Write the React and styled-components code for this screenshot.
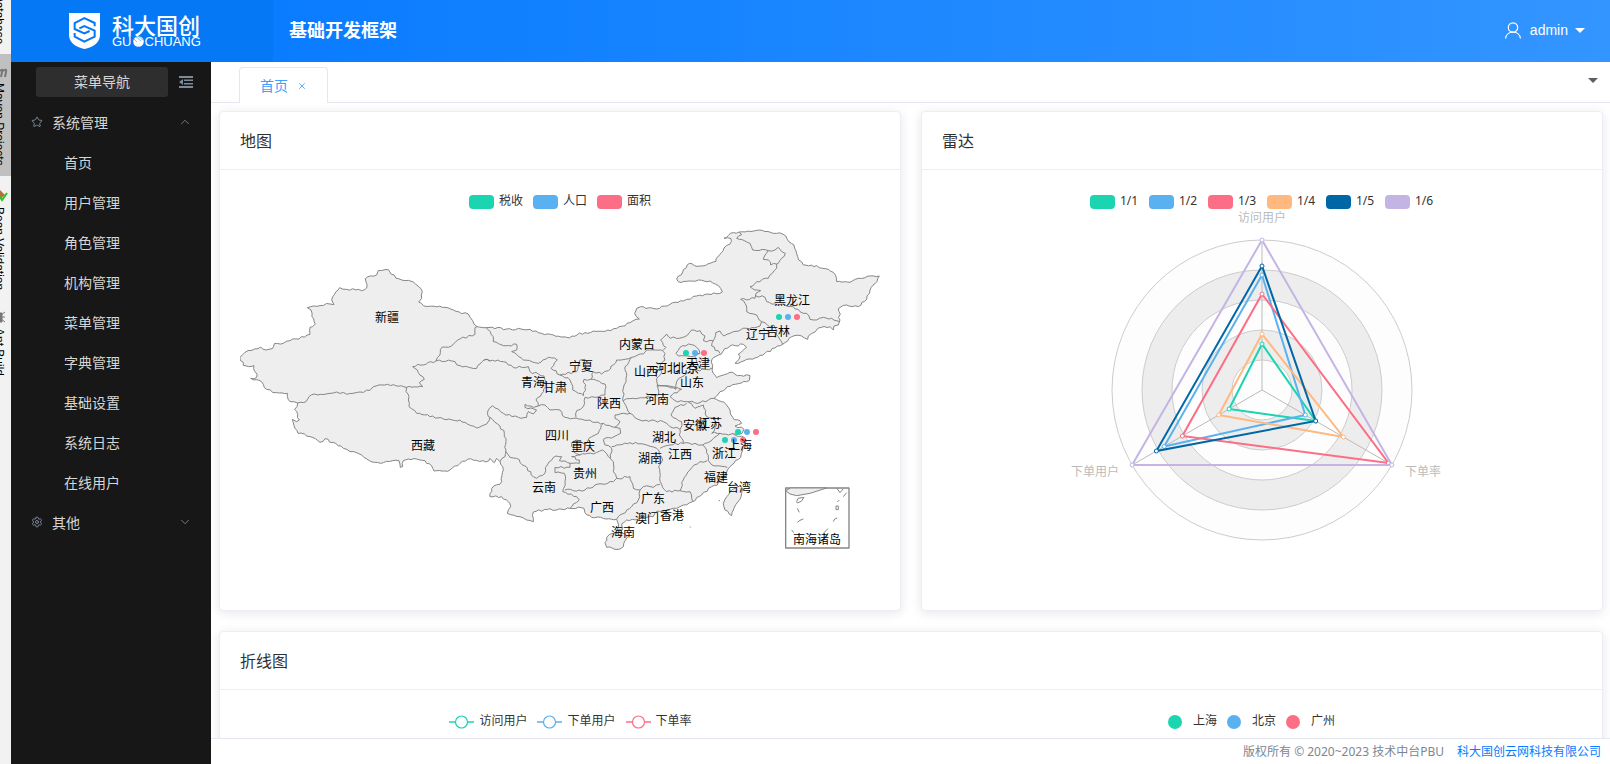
import styled, { createGlobalStyle, css } from "styled-components";
import { Star, Settings, ChevronUp, ChevronDown, X } from "lucide-react";

const GlobalStyle = createGlobalStyle`
	* {
		box-sizing: border-box;
	}
	body {
		margin: 0;
		font-family: "Noto Sans", "Noto Sans CJK SC", sans-serif;
		font-size: 14px;
		color: #303133;
	}
	button {
		border: 0;
		padding: 0;
		background: none;
		font: inherit;
		color: inherit;
		cursor: pointer;
	}
	ul {
		list-style: none;
		margin: 0;
		padding: 0;
	}
`;

const COLORS = {
	green: "#1bd4b0",
	blue: "#5ab1ef",
	pink: "#fb6e86",
	orange: "#ffb980",
	navy: "#0067a6",
	purple: "#c4b4e4",
};

const Screen = styled.div`
	display: flex;
	height: 100vh;
	overflow: hidden;
`;

/* tool window strip on the far left */

const ToolStrip = styled.aside`
	flex: 0 0 11px;
	overflow: hidden;
	background: #f2f2f2;
	color: #000;
	font: 12px/14px "Liberation Sans", sans-serif;
`;

const ToolTab = styled.div`
	display: flex;
	flex-direction: column;
	align-items: flex-start;
	justify-content: ${(props) => (props.$end ? "flex-end" : "flex-start")};
	height: ${(props) => props.$height}px;
	padding: 12px 0 10px;
	background: ${(props) => (props.$active ? "#c0c0c0" : "transparent")};
	white-space: nowrap;

	svg {
		flex: none;
		display: block;
		margin-bottom: 5px;
	}

	span {
		writing-mode: vertical-rl;
		margin-left: -8px;
	}
`;

const Frame = styled.div`
	flex: 1;
	min-width: 0;
	display: flex;
	flex-direction: column;
`;

/* header */

const Header = styled.header`
	flex: 0 0 62px;
	display: flex;
	align-items: center;
	background: linear-gradient(90deg, #0678f8, #0a7cff 17%, #3395ff);
	color: #fff;
`;

const Brand = styled.div`
	width: 262px;
	height: 62px;
	padding-left: 58px;
	display: flex;
	align-items: center;
	gap: 12px;
	background: #0578f5;
`;

const BrandName = styled.div`
	font-family: "Noto Sans CJK SC", sans-serif;
	font-weight: 500;
	font-size: 22px;
	line-height: 18px;
	margin-bottom: 3px;
`;

const BrandLatin = styled.div`
	display: flex;
	align-items: center;
	gap: 1px;
	font: 13px/12px "Liberation Sans", sans-serif;
`;

const AppTitle = styled.h1`
	flex: 1;
	margin: 0;
	padding: 0 0 2px 16px;
	font-size: 18px;
	line-height: 24px;
	font-weight: 700;
`;

const UserButton = styled.button`
	display: flex;
	align-items: center;
	margin-right: 25px;
	padding-bottom: 2px;
	font: 14px/20px "Liberation Sans", sans-serif;

	svg {
		margin-right: 9px;
	}
`;

const Caret = styled.i`
	border: 5px solid transparent;
	border-bottom-width: 0;
	border-top-color: ${(props) => props.color};
	margin-left: ${(props) => (props.$spaced ? "7px" : "0")};
`;

const Body = styled.div`
	flex: 1;
	min-height: 0;
	display: flex;
`;

/* sidebar */

const Sidebar = styled.nav`
	flex: 0 0 200px;
	background: #171717;
	color: #d6d6d6;
`;

const NavTop = styled.div`
	display: flex;
	align-items: center;
	gap: 11px;
	padding: 5px 18px 6px 25px;
`;

const NavButton = styled.button`
	flex: 0 0 132px;
	height: 30px;
	padding-bottom: 2px;
	border-radius: 3px;
	background: #2e2e2e;
`;

const FoldButton = styled.button`
	display: flex;
	color: #7b8998;
`;

const MenuGroup = styled.button`
	display: flex;
	align-items: center;
	width: 100%;
	height: 40px;
	padding: 0 19px 2px 20px;
	color: #d6d6d6;

	svg:first-child {
		color: #7b8998;
		margin-right: 9px;
	}

	svg:last-child {
		color: #7b8998;
		margin-left: auto;
	}
`;

const MenuLink = styled.a`
	display: block;
	padding-left: 53px;
	line-height: 40px;
	color: #d6d6d6;
	text-decoration: none;
`;

/* main */

const Main = styled.main`
	flex: 1;
	min-width: 0;
	display: flex;
	flex-direction: column;
`;

const TabBar = styled.div`
	flex: 0 0 41px;
	display: flex;
	align-items: flex-end;
	padding: 0 12px 0 28px;
	border-bottom: 1px solid #e4e7ed;
`;

const Tab = styled.div`
	display: flex;
	align-items: center;
	gap: 9px;
	height: 36px;
	margin-bottom: -1px;
	padding: 0 20px 2px;
	border: 1px solid #e4e7ed;
	border-bottom: 0;
	border-radius: 4px 4px 0 0;
	background: #fff;
	color: #409eff;

	button {
		display: flex;
		padding-top: 2px;
	}
`;

const TabMenu = styled.button`
	margin: 0 0 19px auto;
	display: flex;
`;

const Content = styled.div`
	flex: 1;
	min-height: 0;
	overflow: auto;
	scrollbar-width: none;
	padding: 8px 7px 8px 8px;
	display: grid;
	grid-template-columns: 1fr 1fr;
	gap: 20px;
	align-content: start;
`;

const Card = styled.section`
	border: 1px solid #ebeef5;
	border-radius: 4px;
	background: #fff;
	box-shadow: 0 2px 12px rgba(0, 0, 0, 0.1);
	${(props) =>
		props.$wide &&
		css`
			grid-column: 1 / -1;
		`}
`;

const CardTitle = styled.h2`
	margin: 0;
	padding: 18px 20px 16px;
	border-bottom: 1px solid #ebeef5;
	font-size: 16px;
	line-height: 23px;
	font-weight: 400;
`;

const CardBody = styled.div`
	padding: 20px;
	display: grid;
	grid-template-columns: repeat(${(props) => props.$columns || 1}, 1fr);
	gap: 20px;
`;

const Chart = styled.div`
	height: 400px;
	min-width: 0;
`;

const Legend = styled.ul`
	display: flex;
	justify-content: center;
	gap: 10px;
	height: 20px;
	padding-top: 5px;
	font-size: 12px;
	line-height: 12px;
	color: #333;
`;

const LegendItem = styled.li`
	display: flex;
	gap: ${(props) => props.$gap || 5}px;

	span {
		min-width: 19px;
	}
`;

const Swatch = styled.i`
	width: ${(props) => (props.$round ? 14 : 25)}px;
	height: 14px;
	border-radius: ${(props) => (props.$round ? "50%" : "4px")};
	background: ${(props) => props.color};
`;

const Drawing = styled.svg`
	display: block;
	width: 100%;
	height: 380px;
	font-size: 12px;

	text {
		text-anchor: middle;
		dominant-baseline: central;
	}
`;

const Footer = styled.footer`
	flex: 0 0 26px;
	display: flex;
	align-items: center;
	justify-content: flex-end;
	gap: 13px;
	padding: 0 9px 2px 0;
	border-top: 1px solid #e4e7ed;
	background: #fff;
	font-size: 12px;
	color: #7b8794;

	a {
		color: #0a7cff;
		text-decoration: none;
	}
`;

/* map data: [dx, dy, points] per sheet, three units to a pixel */

const A = [0, 30];
const B = [720, 270];
const C = [1260, 0];
const D = [1230, 480];

const shift = ([dx, dy], text) =>
	text.split(" ").map((pair) => {
		const [x, y] = pair.split(",").map(Number);
		return [x + dx, y + dy];
	});

// roughens straight runs so that borders look surveyed
const rough = (points) => {
	const out = [points[0]];
	for (let i = 1; i < points.length; i++) {
		const [x1, y1] = points[i - 1];
		const [x2, y2] = points[i];
		const length = Math.hypot(x2 - x1, y2 - y1);
		const steps = Math.floor(length / 8);
		for (let s = 1; s < steps; s++) {
			const t = s / steps;
			const seed = Math.sin((x1 + s * 13) * 12.9 + y1 * 78.2) * 43758.5;
			const off = (seed - Math.floor(seed) - 0.5) * 7;
			out.push([
				x1 + (x2 - x1) * t - ((y2 - y1) / length) * off,
				y1 + (y2 - y1) * t + ((x2 - x1) / length) * off,
			]);
		}
		out.push(points[i]);
	}
	return "M" + out.map(([x, y]) => `${x.toFixed(1)} ${y.toFixed(1)}`).join("L");
};

const OUTLINE = [
	...shift(
		A,
		"30,412 44,398 66,391 92,381 98,387 127,386 133,371 160,370 180,362 240,343 240,322 248,320 256,312 246,290 243,270 232,263 270,257 300,252 312,254 305,240 318,215 329,203 350,208 404,209 410,204 406,176 412,171 440,165 445,151 475,149 484,163 515,180 535,181 550,186 565,199 577,215 575,235 566,246 580,257 645,262 670,270 695,281 715,282 728,302 741,320"
	),
	...shift(
		B,
		"48,83 110,87 180,88 215,100 250,105 290,112 345,98 395,94 440,85 480,68 508,57 494,40 500,25 512,20 560,27 600,13 640,3"
	),
	...shift(
		C,
		"110,268 140,258 217,246 212,235 180,213 145,210 110,214 85,215 80,207 98,186 118,160 150,168 198,154 198,146 222,114 240,102 243,86 222,85 250,68 268,66 320,61 370,70 398,72 412,88 432,105 443,140 460,165 500,167 535,178 550,187 560,215 600,217 625,205 688,198 660,240 650,268 625,290 590,285 565,296 570,330 565,345 552,348 550,360 540,350 505,354 495,366 475,378 473,388 455,378 425,380 398,403 345,430 300,447 255,460 270,440 265,432 290,412 280,403 240,408 205,435 185,450 187,474 190,490 200,503 240,487 262,497 300,497 298,511"
	),
	...shift(
		D,
		"262,50 235,72 222,85 258,103 270,120 278,142 305,160 285,168 312,178 306,190 280,192 312,202 318,215 308,240 302,262 275,285 262,300 245,335 215,350 185,375 158,395"
	),
	...shift(
		B,
		"640,615 620,625 600,628 560,634 550,650 520,655 470,660 455,672 457,690 440,690 445,672 440,658 400,655 365,652 345,638 342,625 300,625 260,630 240,626 190,636 190,665 170,660 150,650 112,640 122,620 115,605 95,590 60,590 65,565 95,545 98,500 90,485 80,475 73,488 60,475"
	),
	...shift(
		A,
		"768,726 722,716 690,730 660,750 612,753 605,738 585,722 535,717 520,722 518,740 511,742 507,722 460,728 418,722 395,705 360,695 340,685 285,656 270,667 240,650 204,640 187,598 200,605 208,600 194,568 203,549 180,545 172,520 140,518 110,508 90,482 62,475 80,472 72,437 40,436 30,412"
	),
];

const BORDERS = [
	[A, "741,320 735,323 735,343 690,357 665,378 637,381 630,405 618,423 548,440 565,458 583,478 568,488 578,500 530,502 490,494 430,500 420,511 390,516 350,523 320,516 300,520 245,524 228,545 203,549"],
	[A, "618,423 665,423 690,437 740,445 762,420 780,422"],
	[A, "530,502 528,515 537,530 537,560 560,580 640,597 690,600 712,612 740,624 770,612 778,600 780,592"],
	[B, "42,180 100,185 130,203 175,200 180,215 222,228 228,250 220,275 198,300 205,318 190,322 165,313 165,322 200,330 190,342 175,335 170,352 145,352 100,340 68,317 58,325 55,350 60,352 90,378 103,400 108,450 105,470 90,485"],
	[B, "108,455 120,472 140,475 165,498 190,530 200,535 225,520 232,495 258,468 275,470 268,482 300,490 328,490 328,480 305,470 330,465"],
	[B, "300,490 300,502 255,502 255,518 283,520 285,545 278,575 320,590 328,600 310,612 300,625"],
	[B, "285,570 310,572 345,570 375,555 430,545 440,535 430,515 430,485 420,475 398,450 370,462 330,465"],
	[B, "205,318 225,315 240,330 270,330 285,352 310,355 400,370 385,400 365,410 350,430 320,420 305,430 310,455 330,465"],
	[B, "400,370 435,382 450,385 452,400 432,410 400,418 405,435 425,445 422,475"],
	[B, "48,83 70,110 70,125 100,137 140,133 140,150 125,155 160,180 205,190 235,172 262,180 243,205 270,225 300,240 308,270 325,280 340,287"],
	[B, "270,225 320,215 330,180 345,178 348,205 370,215 362,238 342,238 345,262 340,287"],
	[B, "362,238 405,252 405,285 375,292 345,292 340,320 320,332 318,352"],
	[B, "370,215 395,222 415,212 440,180 485,172 465,200 468,235 460,265 458,300 480,340 435,345 435,355 450,365 435,382"],
	[B, "485,172 520,162 530,150 575,150 585,160 585,180 570,195 575,215 560,235 563,257 565,285 530,290 490,295 460,302"],
	[B, "480,340 510,360 580,365 600,380 630,388"],
	[C, "38,422 48,412 32,390 50,372 62,385 105,380 125,360 150,362 165,378 160,392 190,392 185,408 210,430"],
	[C, "190,392 197,368 210,363 222,378 250,365 290,355 330,348 335,335 320,315 290,305 285,280 272,268 315,265 318,250 332,242 315,240 300,230 320,215 355,205 380,175 380,162 362,165 355,150 340,148 355,122 308,120 300,100 260,85 275,74 268,66"],
	[C, "318,258 345,262 350,275 375,282 430,290 450,305 470,310 480,328 500,330 520,322 545,325 570,335"],
	[C, "355,122 375,120 385,112 406,130 385,160 380,162"],
	[C, "335,335 360,352 372,345 385,380 398,403"],
	[C, "85,438 78,430 90,412 115,402 140,412 150,430 130,440 85,438"],
	[C, "150,430 135,440 145,470 165,478 187,474"],
	[C, "165,478 110,490 80,515 78,538 22,525"],
	[D, "50,48 105,52 125,58 90,80 105,92 140,95 180,98 222,85"],
	[D, "140,100 105,112 93,135 125,155 120,178 118,195 130,220"],
	[D, "145,97 165,115 190,105 200,140 225,142 230,165 215,190 240,190 265,195 280,190"],
	[D, "60,235 90,225 130,220 165,220 188,225 200,240 205,272 225,288 262,292"],
	[D, "188,225 210,215 222,203 240,190"],
	[B, "425,440 480,428 530,435 560,445 578,480 566,500 575,553 590,575 630,572 640,540 660,510 690,485 712,482"],
	[B, "440,535 480,530 490,565 510,570 505,600 470,630 440,658"],
	[B, "510,570 520,560 550,562 570,553"],
	[B, "630,572 660,575 668,605"],
];

const ISLANDS = [
	[B, "405,728 410,712 430,700 465,700 472,712 460,740 435,748 410,742 405,728"],
	[D, "300,348 285,355 260,380 250,400 255,420 275,437 280,420 305,370 308,355 300,348"],
];

const PROVINCES = [
	["新疆", 147, 107], ["西藏", 183, 235], ["内蒙古", 397, 134],
	["宁夏", 341, 156], ["青海", 293, 172], ["甘肃", 315, 177],
	["陕西", 369, 193], ["山西", 406, 161], ["河北", 427, 158],
	["北京", 447, 158], ["天津", 458, 153], ["山东", 452, 172],
	["河南", 417, 189], ["四川", 317, 225], ["重庆", 343, 236],
	["湖北", 424, 227], ["安徽", 455, 215], ["江苏", 470, 213],
	["湖南", 410, 248], ["江西", 440, 244], ["浙江", 484, 243],
	["上海", 500, 235], ["福建", 476, 267], ["台湾", 499, 277],
	["贵州", 345, 263], ["云南", 304, 277], ["广西", 362, 297],
	["广东", 413, 288], ["澳门", 407, 308], ["香港", 432, 305],
	["海南", 383, 322], ["黑龙江", 552, 90], ["吉林", 538, 121],
	["辽宁", 518, 124], ["南海诸岛", 577, 329],
];

const CITIES = [[539, 107], [446, 143], [485, 230], [498, 222]];

const ChinaMap = () => (
	<Drawing viewBox="0 0 640 380">
		<g transform="translate(-10 0) scale(0.33333)" fill="none" stroke="#858585" strokeWidth="3" strokeLinejoin="round">
			<path d={rough(OUTLINE)} fill="#eee" />
			{ISLANDS.map(([sheet, points], i) => (
				<path key={i} d={rough(shift(sheet, points))} fill="#eee" />
			))}
			{BORDERS.map(([sheet, points], i) => (
				<path key={i} d={rough(shift(sheet, points))} />
			))}
			<g transform="translate(1230 480)">
				<path d="M437 354H627V534H437z" strokeWidth="4" />
				<path d="M437 362l15-8h108l-50 16-40 7-20-5z" fill="#eee" />
				<path d="M590 354l10 14 10-12M470 395l4-10 18-3-8 12-12 5zM472 415l6 12M472 457l8-6 10-4M455 480l6 8M588 408h7v11h-7zM580 455l4-8 8-3M610 380l10-12M592 396l6-6M550 490l14-14" />
				<path d="M236 392h4M149 470l3 2M124 460h2" />
			</g>
		</g>
		{CITIES.map(([x, y]) => (
			<g key={x}>
				<circle cx={x} cy={y} r="3" fill={COLORS.green} />
				<circle cx={x + 9} cy={y} r="3" fill={COLORS.blue} />
				<circle cx={x + 18} cy={y} r="3" fill={COLORS.pink} />
			</g>
		))}
		<g fill="#000">
			{PROVINCES.map(([name, x, y]) => (
				<text key={name} x={x} y={y}>
					{name}
				</text>
			))}
		</g>
	</Drawing>
);

// distances along the axes: top, lower left, lower right
const SERIES = [
	{ name: "1/1", color: COLORS.green, values: [46, 38, 62] },
	{ name: "1/2", color: COLORS.blue, values: [115, 113, 50] },
	{ name: "1/3", color: COLORS.pink, values: [96, 92, 146] },
	{ name: "1/4", color: COLORS.orange, values: [56, 50, 94] },
	{ name: "1/5", color: COLORS.navy, values: [124, 122, 62] },
	{ name: "1/6", color: COLORS.purple, values: [150, 150, 150] },
];

const onAxis = (value, index) => {
	const angle = ((-90 - index * 120) * Math.PI) / 180;
	return [value * Math.cos(angle), value * Math.sin(angle)];
};

const Radar = () => (
	<Drawing viewBox="-320 -180 640 380">
		<g stroke="#ccc">
			{[150, 120, 90, 60, 30].map((r, i) => (
				<circle key={r} r={r} fill={i % 2 ? "#ededed" : "#fdfdfd"} />
			))}
		</g>
		{[0, 1, 2].map((axis) => {
			const [x, y] = onAxis(150, axis);
			return <line key={axis} x2={x} y2={y} stroke="#bbb" />;
		})}
		{SERIES.map(({ name, color, values }) => (
			<g key={name} fill="none" stroke={color}>
				<polygon points={values.map(onAxis).join(" ")} strokeWidth="2" />
				{values.map((value, i) => {
					const [cx, cy] = onAxis(value, i);
					return <circle key={i} cx={cx} cy={cy} r="2" fill="#fff" />;
				})}
			</g>
		))}
		<g fill="#bbb">
			<text y="-173">访问用户</text>
			<text x="-167" y="81">下单用户</text>
			<text x="161" y="81">下单率</text>
		</g>
	</Drawing>
);

const Shield = () => (
	<svg width="31" height="36" viewBox="0 0 93 108">
		<path d="M0 0H93V66C93 90 70 104 46.500 108 23 104 0 90 0 66z" fill="#fff" />
		<g fill="none" stroke="#0578f5" strokeWidth="6">
			<path d="M77 40V30L46 15 17 30V48L46 61 62 54" />
			<path d="M17 60V71L46 86 77 71V53L46 39 31 46" />
		</g>
	</svg>
);

const Ball = () => (
	<svg width="11" height="11" viewBox="0 0 11 11">
		<circle cx="5.500" cy="5.500" r="5.300" fill="#fff" />
		<path d="M3 1l5 4M5 0l5 4M1 3l3 3" stroke="#0578f5" strokeWidth="0.500" />
	</svg>
);

const MENU = ["首页", "用户管理", "角色管理", "机构管理", "菜单管理", "字典管理", "基础设置", "系统日志", "在线用户"];

const App = () => (
	<Screen>
		<GlobalStyle />
		<ToolStrip>
			<ToolTab $height={54} $end>
				<span>Database</span>
			</ToolTab>
			<ToolTab $height={122} $active>
				<svg width="8" height="12" viewBox="0 0 8 12">
					<path d="M0 5q3-3 2 1l-1 5M3 5q4-3 3 1l-1 5" fill="none" stroke="#777" strokeWidth="2" />
				</svg>
				<span>Maven Projects</span>
			</ToolTab>
			<ToolTab $height={123}>
				<svg width="8" height="14" viewBox="0 0 8 14">
					<path d="M0 2l5 5-5 4z" fill="#b5703c" />
					<path d="M0 9l2 3 5-7" fill="none" stroke="#1fc71f" strokeWidth="2" />
				</svg>
				<span>Bean Validation</span>
			</ToolTab>
			<ToolTab $height={90}>
				<svg width="8" height="12" viewBox="0 0 8 12">
					<path d="M0 2h2v9H0zM1 4l4-3M1 6h4M1 8l4 3" fill="#777" stroke="#777" />
				</svg>
				<span>Ant Build</span>
			</ToolTab>
		</ToolStrip>
		<Frame>
			<Header>
				<Brand>
					<Shield />
					<div>
						<BrandName>科大国创</BrandName>
						<BrandLatin>
							GU
							<Ball />
							CHUANG
						</BrandLatin>
					</div>
				</Brand>
				<AppTitle>基础开发框架</AppTitle>
				<UserButton>
					<svg width="16" height="17" viewBox="0 0 16 17" fill="none" stroke="#fff" strokeWidth="1.200">
						<circle cx="8" cy="5.500" r="4.700" />
						<path d="M.6 16.500C.8 12.500 4 10.200 8 10.200s7.200 2.300 7.400 6.300" />
					</svg>
					admin
					<Caret color="#fff" $spaced />
				</UserButton>
			</Header>
			<Body>
				<Sidebar>
					<NavTop>
						<NavButton>菜单导航</NavButton>
						<FoldButton aria-label="收起菜单">
							<svg width="14" height="12" viewBox="0 0 14 12" fill="currentColor">
								<path d="M0 0h14v2H0zM5 3.500h9v1.500H5zM5 7h9v1.500H5zM0 10h14v2H0zM0 6l4-3v6z" />
							</svg>
						</FoldButton>
					</NavTop>
					<MenuGroup aria-expanded="true">
						<Star size={12} strokeWidth={2} />
						系统管理
						<ChevronUp size={14} strokeWidth={1.5} />
					</MenuGroup>
					{MENU.map((name) => (
						<MenuLink key={name} href="#">
							{name}
						</MenuLink>
					))}
					<MenuGroup aria-expanded="false">
						<Settings size={12} strokeWidth={2} />
						其他
						<ChevronDown size={14} strokeWidth={1.5} />
					</MenuGroup>
				</Sidebar>
				<Main>
					<TabBar>
						<Tab>
							首页
							<button aria-label="关闭">
								<X size={10} strokeWidth={2} />
							</button>
						</Tab>
						<TabMenu aria-label="更多">
							<Caret color="#5a5e66" />
						</TabMenu>
					</TabBar>
					<Content>
						<Card>
							<CardTitle>地图</CardTitle>
							<CardBody>
								<Chart>
									<Legend>
										<LegendItem><Swatch color={COLORS.green} /><span>税收</span></LegendItem>
										<LegendItem><Swatch color={COLORS.blue} /><span>人口</span></LegendItem>
										<LegendItem><Swatch color={COLORS.pink} /><span>面积</span></LegendItem>
									</Legend>
									<ChinaMap />
								</Chart>
							</CardBody>
						</Card>
						<Card>
							<CardTitle>雷达</CardTitle>
							<CardBody>
								<Chart>
									<Legend>
										{SERIES.map(({ name, color }) => (
											<LegendItem key={name}><Swatch color={color} /><span>{name}</span></LegendItem>
										))}
									</Legend>
									<Radar />
								</Chart>
							</CardBody>
						</Card>
						<Card $wide>
							<CardTitle>折线图</CardTitle>
							<CardBody $columns={2}>
								<Chart>
									<Legend>
										{[["访问用户", COLORS.green], ["下单用户", COLORS.blue], ["下单率", COLORS.pink]].map(([name, color]) => (
											<LegendItem key={name}>
												<svg width="25" height="14" fill="none" stroke={color}>
													<path d="M0 7h25" strokeWidth="1.500" />
													<circle cx="12.500" cy="7" r="6" fill="#fff" strokeWidth="1.200" />
												</svg>
												<span>{name}</span>
											</LegendItem>
										))}
									</Legend>
								</Chart>
								<Chart>
									<Legend>
										<LegendItem $gap={11}><Swatch $round color={COLORS.green} /><span>上海</span></LegendItem>
										<LegendItem $gap={11}><Swatch $round color={COLORS.blue} /><span>北京</span></LegendItem>
										<LegendItem $gap={11}><Swatch $round color={COLORS.pink} /><span>广州</span></LegendItem>
									</Legend>
								</Chart>
							</CardBody>
						</Card>
					</Content>
					<Footer>
						<span>版权所有 © 2020~2023 技术中台PBU</span>
						<a href="#">科大国创云网科技有限公司</a>
					</Footer>
				</Main>
			</Body>
		</Frame>
	</Screen>
);

export default App;
